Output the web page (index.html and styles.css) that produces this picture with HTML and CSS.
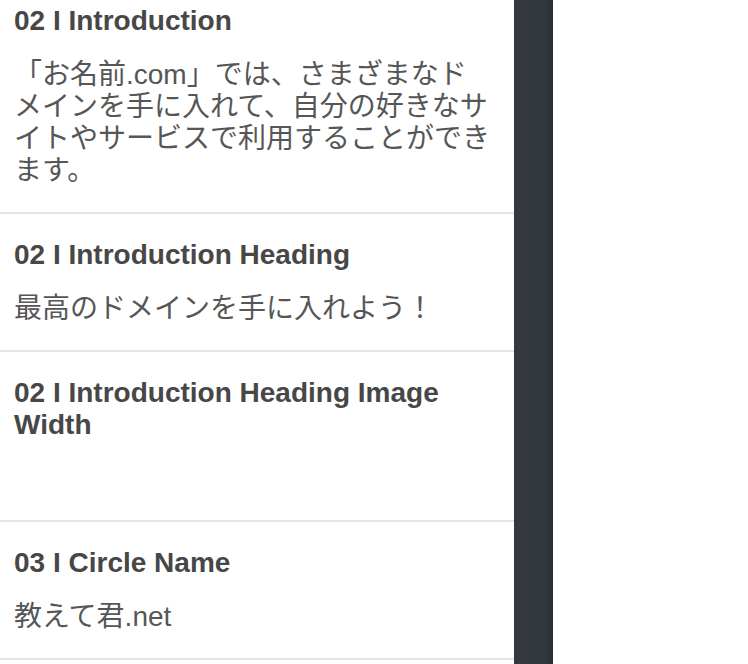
FILE: index.html
```html
<!DOCTYPE html>
<html lang="ja">

<head>
  <meta charset="UTF-8">
  <meta name="viewport" content="width=device-width, initial-scale=1.0">
  <title>Settings</title>
  <link rel="stylesheet" href="styles.css">
</head>

<body>

<div id="screen">

  <div id="panel">

    <div class="field">
      <h2 class="fieldLabel">02 I Introduction</h2>
      <p class="fieldValue">「お名前.com」では、さまざまなドメインを手に入れて、自分の好きなサイトやサービスで利用することができます。</p>
    </div>

    <div class="field">
      <h2 class="fieldLabel">02 I Introduction Heading</h2>
      <p class="fieldValue">最高のドメインを手に入れよう！</p>
    </div>

    <div class="field">
      <h2 class="fieldLabel">02 I Introduction Heading Image Width</h2>
      <p class="fieldValue"></p>
    </div>

    <div class="field">
      <h2 class="fieldLabel">03 I Circle Name</h2>
      <p class="fieldValue">教えて君.net</p>
    </div>

  </div>

  <div id="divider"></div>

  <div id="preview"></div>

</div>

</body>

</html>
```

FILE: styles.css
```css
    html, body {
      margin: 0;
      height: 100%;
      background-color: white;
      overflow: hidden;
    }

    #screen {
      display: flex;
      height: 100%;
    }

    #panel {
      width: 514px;
      flex-shrink: 0;
      /* list is scrolled a little */
      margin-top: -20px;
    }

    .field {
      padding: 25px 22px 25px 14px;
      border-bottom: 2px solid #e4e4e4;
    }

    .fieldLabel {
      margin: 0;
      font-family: 'Liberation Sans', Arial, sans-serif;
      font-weight: bold;
      font-size: 28px;
      line-height: 32px;
      color: #474747;
    }

    .fieldValue {
      margin: 22px 0 0 0;
      min-height: 32px;
      font-family: 'Liberation Sans', 'Noto Sans CJK JP', sans-serif;
      font-size: 28px;
      line-height: 32px;
      color: #565656;
      text-spacing-trim: space-all;
    }

    #divider {
      width: 39px;
      flex-shrink: 0;
      background: linear-gradient(to right, #343840 0%, #33373e 75%, #2b2f35 100%);
    }

    #preview {
      flex: 1;
      background-color: white;
    }
```
